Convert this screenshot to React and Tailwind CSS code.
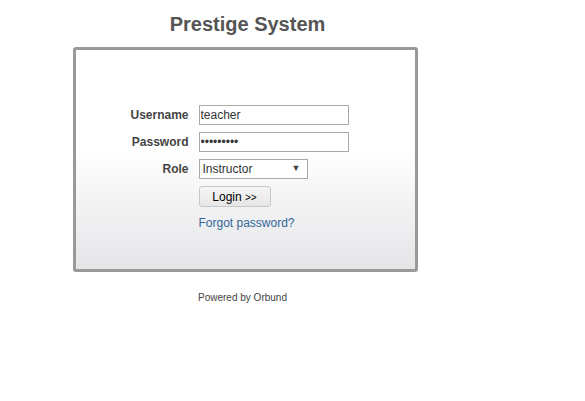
import React from 'react';

const App = () => {
    return (
        <div className="min-h-screen bg-white font-['Liberation_Sans',Arial,sans-serif]">
            <div className="w-[490px] pt-[12px] flex flex-col items-center">
                <h1 className="text-[20px] leading-[24px] font-bold text-[#555555] ml-[5px]">Prestige System</h1>

                <div className="mt-[11px] w-[345px] h-[225px] border-[3px] border-[#999999] rounded-[3px] bg-gradient-to-b from-white from-45% to-[#e4e5e7]">
                    <div className="grid grid-cols-[113px_auto] gap-x-[10px] gap-y-[7px] pt-[55px] items-center">
                        <label className="text-[12px] font-bold text-[#444444] text-right">Username</label>
                        <input
                            type="text"
                            defaultValue="teacher"
                            className="w-[150px] h-[20px] border border-[#a9a9a9] bg-white px-[1px] text-[12px] text-[#333333] outline-none"
                        />

                        <label className="text-[12px] font-bold text-[#444444] text-right">Password</label>
                        <input
                            type="password"
                            defaultValue="teacher12"
                            className="w-[150px] h-[20px] border border-[#a9a9a9] bg-white px-[1px] text-[12px] text-[#333333] outline-none"
                        />

                        <label className="text-[12px] font-bold text-[#444444] text-right">Role</label>
                        <div className="w-[109px] h-[20px] border border-[#a9a9a9] bg-white flex items-center justify-between pl-[3px] pr-[6px] text-[12px] text-[#333333]">
                            <span>Instructor</span>
                            <span className="text-[9px] text-[#444444]">▼</span>
                        </div>

                        <div></div>
                        <div className="flex">
                            <button className="w-[72px] h-[21px] rounded-[3px] border border-[#c8c8c8] bg-gradient-to-b from-[#f6f6f6] to-[#e6e6e6] text-[12px] text-black">
                                Login <span className="text-[10px]">&gt;&gt;</span>
                            </button>
                        </div>

                        <div></div>
                        <a href="#" className="text-[12px] text-[#336699]">Forgot password?</a>
                    </div>
                </div>

                <p className="mt-[18px] text-[10px] text-[#444444] mr-[5px]">Powered by Orbund</p>
            </div>
        </div>
    );
};

export default App;
